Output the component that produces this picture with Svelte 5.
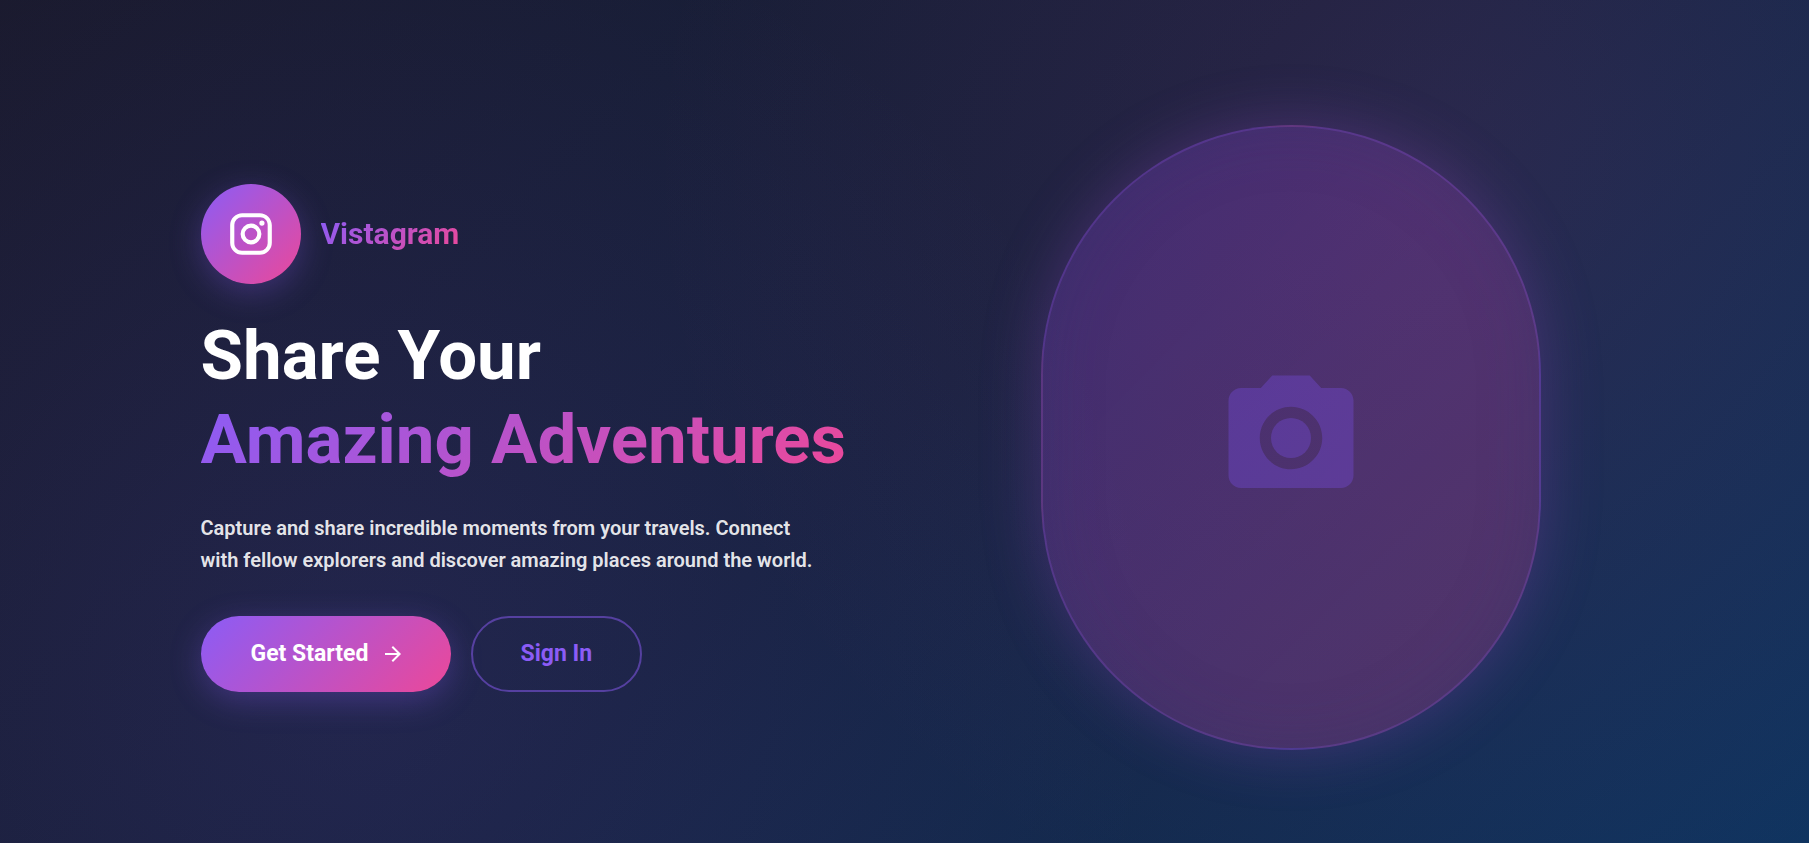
<script>
  const brand = 'Vistagram';
</script>

<main class="page">
  <div class="container">
    <section class="intro">
      <div class="brand">
        <span class="badge">
          <svg viewBox="0 0 24 24" aria-hidden="true">
            <path d="M7.8 2h8.4C19.4 2 22 4.6 22 7.8v8.4a5.8 5.8 0 0 1-5.8 5.8H7.8C4.6 22 2 19.4 2 16.2V7.8A5.8 5.8 0 0 1 7.8 2m-.2 2A3.6 3.6 0 0 0 4 7.6v8.8C4 18.39 5.61 20 7.6 20h8.8a3.6 3.6 0 0 0 3.6-3.6V7.6C20 5.61 18.39 4 16.4 4H7.6m9.65 1.5a1.25 1.25 0 0 1 1.25 1.25A1.25 1.25 0 0 1 17.25 8 1.25 1.25 0 0 1 16 6.75a1.25 1.25 0 0 1 1.25-1.25M12 7a5 5 0 0 1 5 5 5 5 0 0 1-5 5 5 5 0 0 1-5-5 5 5 0 0 1 5-5m0 2a3 3 0 0 0-3 3 3 3 0 0 0 3 3 3 3 0 0 0 3-3 3 3 0 0 0-3-3z" />
          </svg>
        </span>
        <span class="name gradient-text">{brand}</span>
      </div>

      <h1>
        Share Your<br />
        <span class="gradient-text accent">Amazing Adventures</span>
      </h1>

      <p>
        Capture and share incredible moments from your travels. Connect with
        fellow explorers and discover amazing places around the world.
      </p>

      <div class="actions">
        <button type="button" class="primary">
          Get Started
          <svg viewBox="0 0 24 24" aria-hidden="true">
            <path d="m12 4-1.41 1.41L16.17 11H4v2h12.17l-5.58 5.59L12 20l8-8z" />
          </svg>
        </button>
        <button type="button" class="secondary">Sign In</button>
      </div>
    </section>

    <section class="visual">
      <div class="capsule">
        <svg viewBox="0 0 24 24" aria-hidden="true">
          <circle cx="12" cy="12" r="3.2" />
          <path d="M9 2 7.17 4H4c-1.1 0-2 .9-2 2v12c0 1.1.9 2 2 2h16c1.1 0 2-.9 2-2V6c0-1.1-.9-2-2-2h-3.17L15 2zm3 15c-2.76 0-5-2.24-5-5s2.24-5 5-5 5 2.24 5 5-2.24 5-5 5" />
        </svg>
      </div>
    </section>
  </div>
</main>

<style>
  :global(body) {
    margin: 0;
    background: #1a1a2e;
  }

  .page {
    --violet: #8b5cf6;
    --pink: #ec4899;
    --brand-gradient: linear-gradient(135deg, var(--violet) 0%, var(--pink) 100%);
    box-sizing: border-box;
    min-height: 100vh;
    display: flex;
    align-items: center;
    justify-content: center;
    font-family: Roboto, 'Liberation Sans', sans-serif;
    color: #fff;
    background:
      radial-gradient(circle at 20% 80%, rgba(139, 92, 246, 0.1) 0%, transparent 50%),
      radial-gradient(circle at 80% 20%, rgba(236, 72, 153, 0.1) 0%, transparent 50%),
      linear-gradient(135deg, #1a1a2e 0%, #16213e 50%, #0f3460 100%);
  }

  .container {
    box-sizing: border-box;
    width: 100%;
    max-width: 1536px;
    padding: 64px 24px 32px;
    display: grid;
    grid-template-columns: repeat(auto-fit, minmax(min(100%, 560px), 1fr));
    align-items: center;
    gap: 56px;
  }

  .intro {
    padding-left: 40px;
  }

  .brand {
    display: flex;
    align-items: center;
    gap: 20px;
    margin-bottom: 30px;
  }

  .badge {
    width: 100px;
    height: 100px;
    flex: none;
    display: flex;
    align-items: center;
    justify-content: center;
    border-radius: 50%;
    background: var(--brand-gradient);
    box-shadow: 0 8px 32px rgba(139, 92, 246, 0.3);
  }

  .badge svg {
    width: 50px;
    height: 50px;
    fill: #fff;
  }

  .gradient-text {
    background: var(--brand-gradient);
    background-clip: text;
    -webkit-background-clip: text;
    color: transparent;
  }

  .name {
    font-size: 30px;
    line-height: 36px;
    font-weight: 700;
  }

  h1 {
    margin: 0 0 30px;
    font-size: 69px;
    line-height: 84px;
    font-weight: 700;
  }

  .accent {
    display: inline-block;
  }

  p {
    max-width: 630px;
    margin: 0 0 40px;
    font-size: 20px;
    line-height: 32px;
    font-weight: 600;
    color: rgba(255, 255, 255, 0.9);
  }

  .actions {
    display: flex;
    flex-wrap: wrap;
    gap: 20px;
  }

  button {
    display: inline-flex;
    align-items: center;
    justify-content: center;
    gap: 12px;
    padding: 18px 48px;
    border: 2px solid transparent;
    border-radius: 50px;
    font: 700 23px/36px Roboto, 'Liberation Sans', sans-serif;
    cursor: pointer;
  }

  .primary {
    padding-right: 44px;
    color: #fff;
    background: var(--brand-gradient) border-box;
    box-shadow: 0 8px 32px rgba(139, 92, 246, 0.3);
  }

  .primary svg {
    width: 24px;
    height: 24px;
    fill: currentColor;
  }

  .secondary {
    color: var(--violet);
    background: none;
    border-color: rgba(139, 92, 246, 0.5);
  }

  .visual {
    display: flex;
    justify-content: center;
  }

  .capsule {
    box-sizing: border-box;
    width: 100%;
    max-width: 500px;
    aspect-ratio: 4 / 5;
    display: flex;
    align-items: center;
    justify-content: center;
    border: 2px solid rgba(139, 92, 246, 0.2);
    border-radius: 250px;
    background: linear-gradient(135deg, rgba(139, 70, 230, 0.3) 0%, rgba(236, 72, 153, 0.27) 100%);
    box-shadow:
      0 0 60px rgba(150, 75, 200, 0.3),
      inset 0 0 60px rgba(40, 50, 100, 0.25);
  }

  .capsule svg {
    width: 150px;
    height: 150px;
    fill: rgba(124, 80, 240, 0.32);
  }
</style>
